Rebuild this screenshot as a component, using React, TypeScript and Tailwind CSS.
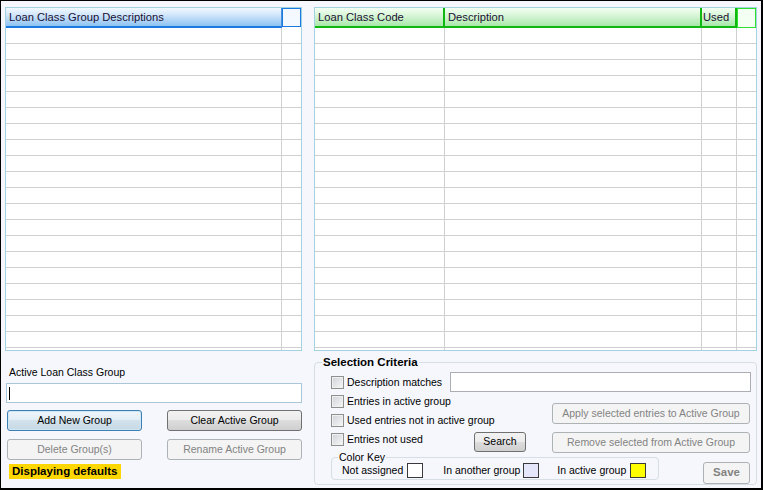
import React from "react";

const btnNormal =
  "h-[21px] rounded-[3px] border border-[#707070] bg-[linear-gradient(#f2f2f2_0%,#ebebeb_50%,#dddddd_50%,#cfcfcf_100%)] text-black flex items-center justify-center";
const btnFocus =
  "h-[21px] rounded-[3px] border border-[#3c7fb1] bg-[linear-gradient(#eef5fa_0%,#e1edf5_50%,#d2e2ec_50%,#c6d9e5_100%)] shadow-[inset_0_0_0_1px_#cfe6f5] text-black flex items-center justify-center";
const btnDisabled =
  "h-[21px] rounded-[3px] border border-[#adb2b5] bg-[#f4f4f4] text-[#838383] flex items-center justify-center";

function CheckRow({ label, className = "" }: { label: string; className?: string }) {
  return (
    <div className={"flex items-center h-[19px] " + className}>
      <span className="w-[13px] h-[13px] shrink-0 border border-[#8e8f8f] bg-[linear-gradient(135deg,#cfd2d8,#f7f7f7)] shadow-[inset_0_0_0_1px_#f0f0f0]" />
      <span className="ml-[3px] leading-[13px] whitespace-nowrap">{label}</span>
    </div>
  );
}

function LeftGrid() {
  const rows = Array.from({ length: 21 });
  return (
    <div className="h-[344px] border border-[#a3d3e3] bg-white flex flex-col overflow-hidden">
      <div className="flex h-[20px] shrink-0">
        <div className="w-[276px] h-[20px] border-b-2 border-r border-b-[#1a7ae0] border-r-[#4a90e0] bg-[linear-gradient(#f3f9ff_0%,#cfe5fa_40%,#8ec3f3_100%)] flex items-center pl-[3px] pt-px text-[11.2px] text-[#1a0f33] whitespace-nowrap">
          Loan Class Group Descriptions
        </div>
        <div className="w-[19px] h-[19px] border border-[#1a7ae0] bg-[#f4f9ff]" />
      </div>
      {rows.map((_, i) => (
        <div key={i} className="flex h-[16px] shrink-0 border-b border-[#d0d0d0]">
          <div className="w-[276px] border-r border-[#d0d0d0]" />
          <div className="w-[19px]" />
        </div>
      ))}
    </div>
  );
}

function RightGrid() {
  const rows = Array.from({ length: 21 });
  const hdr =
    "h-[20px] pt-px border-b-2 border-r-2 border-[#0fb80f] bg-[linear-gradient(#f4fff4_0%,#d8f6d8_40%,#a9e8a9_100%)] flex items-center text-[11.2px] text-[#1a0f33] whitespace-nowrap";
  return (
    <div className="h-[344px] border border-[#a3d3e3] bg-white flex flex-col overflow-hidden">
      <div className="flex h-[20px] shrink-0">
        <div className={"w-[130px] pl-[3px] " + hdr}>Loan Class Code</div>
        <div className={"w-[257px] pl-[3px] " + hdr}>Description</div>
        <div className={"w-[35px] pl-[1px] " + hdr}>Used</div>
        <div className="w-[19px] h-[20px] border border-[#2ee02e] bg-[#f3fff3]" />
      </div>
      {rows.map((_, i) => (
        <div key={i} className="flex h-[16px] shrink-0 border-b border-[#d0d0d0]">
          <div className="w-[130px] border-r border-[#d0d0d0]" />
          <div className="w-[257px] border-r border-[#d0d0d0]" />
          <div className="w-[35px] border-r border-[#d0d0d0]" />
          <div className="w-[19px]" />
        </div>
      ))}
    </div>
  );
}

function Swatch({ color }: { color: string }) {
  return <span className={"w-[16px] h-[15px] border border-[#3a3a3a] shrink-0 " + color} />;
}

export default function App() {
  return (
    <div className="w-[763px] h-[490px] bg-[#f5f7fd] border-l border-t border-r-2 border-b-2 border-black pl-[4px] pt-[6px] flex gap-[12px] font-['Liberation_Sans',Arial,sans-serif] text-[10.5px] text-black overflow-hidden">
      {/* Left column */}
      <div className="w-[297px] flex flex-col">
        <LeftGrid />
        <div className="mt-[15px] pl-[4px] leading-[13px] whitespace-nowrap">Active Loan Class Group</div>
        <div className="mt-[4px] ml-px w-[296px] h-[20px] border border-[#a9c6db] bg-white flex items-center">
          <span className="ml-[2px] w-px h-[13px] bg-black" />
        </div>
        <div className="mt-[7px] flex pl-[2px] gap-[25px]">
          <div className={"w-[135px] " + btnFocus}>Add New Group</div>
          <div className={"w-[135px] " + btnNormal}>Clear Active Group</div>
        </div>
        <div className="mt-[8px] flex pl-[2px] gap-[25px]">
          <div className={"w-[135px] " + btnDisabled}>Delete Group(s)</div>
          <div className={"w-[135px] " + btnDisabled}>Rename Active Group</div>
        </div>
        <div className="mt-[4px] ml-[4px] self-start h-[15px] bg-[#ffd700] font-bold text-[11.5px] leading-[15px] pl-[3px] pr-[4px] whitespace-nowrap">
          Displaying defaults
        </div>
      </div>

      {/* Right column */}
      <div className="w-[443px] flex flex-col">
        <RightGrid />
        <div className="relative mt-[11px] h-[123px] border border-[#d5dfe5] rounded-[4px] pl-[16px] pr-[5px] pt-[9px] flex flex-col">
          <span className="absolute -top-[7px] left-[7px] px-[1px] bg-[#f5f7fd] font-bold text-[11.5px] leading-[13px] whitespace-nowrap">
            Selection Criteria
          </span>
          {/* Row A */}
          <div className="flex items-center h-[20px]">
            <CheckRow label="Description matches" />
            <div className="ml-auto w-[301px] h-[20px] border border-[#abadb3] bg-white" />
          </div>
          {/* Row B */}
          <div className="flex">
            <div className="w-[221px] flex flex-col">
              <CheckRow label="Entries in active group" />
              <CheckRow label="Used entries not in active group" />
              <div className="flex items-start h-[19px]">
                <CheckRow label="Entries not used" className="w-[143px]" />
                <div className={"mt-[2px] w-[52px] !h-[20px] " + btnNormal}>Search</div>
              </div>
            </div>
            <div className="ml-auto mr-px w-[198px] pt-[11px] flex flex-col gap-[8px]">
              <div className={"w-full " + btnDisabled}>Apply selected entries to Active Group</div>
              <div className={"w-full " + btnDisabled}>Remove selected from Active Group</div>
            </div>
          </div>
          {/* Row C */}
          <div className="flex mt-[4px]">
            <div className="relative w-[328px] h-[23px] border border-[#d5dfe5] rounded-[4px] pl-[10px] pt-[5px] flex items-start">
              <span className="absolute -top-[7px] left-[6px] px-[1px] bg-[#f5f7fd] leading-[13px] whitespace-nowrap">
                Color Key
              </span>
              <div className="flex items-center h-[15px] gap-[4px]">
                <span className="whitespace-nowrap">Not assigned</span>
                <Swatch color="bg-white" />
              </div>
              <div className="flex items-center h-[15px] gap-[3px] ml-[20px]">
                <span className="whitespace-nowrap">In another group</span>
                <Swatch color="bg-[#e6e6fa]" />
              </div>
              <div className="flex items-center h-[15px] gap-[4px] ml-[18px]">
                <span className="whitespace-nowrap">In active group</span>
                <Swatch color="bg-[#ffff00]" />
              </div>
            </div>
            <div className={"ml-auto mr-px mt-[5px] w-[47px] !h-[22px] font-bold text-[11.5px] " + btnDisabled}>Save</div>
          </div>
        </div>
      </div>
    </div>
  );
}
